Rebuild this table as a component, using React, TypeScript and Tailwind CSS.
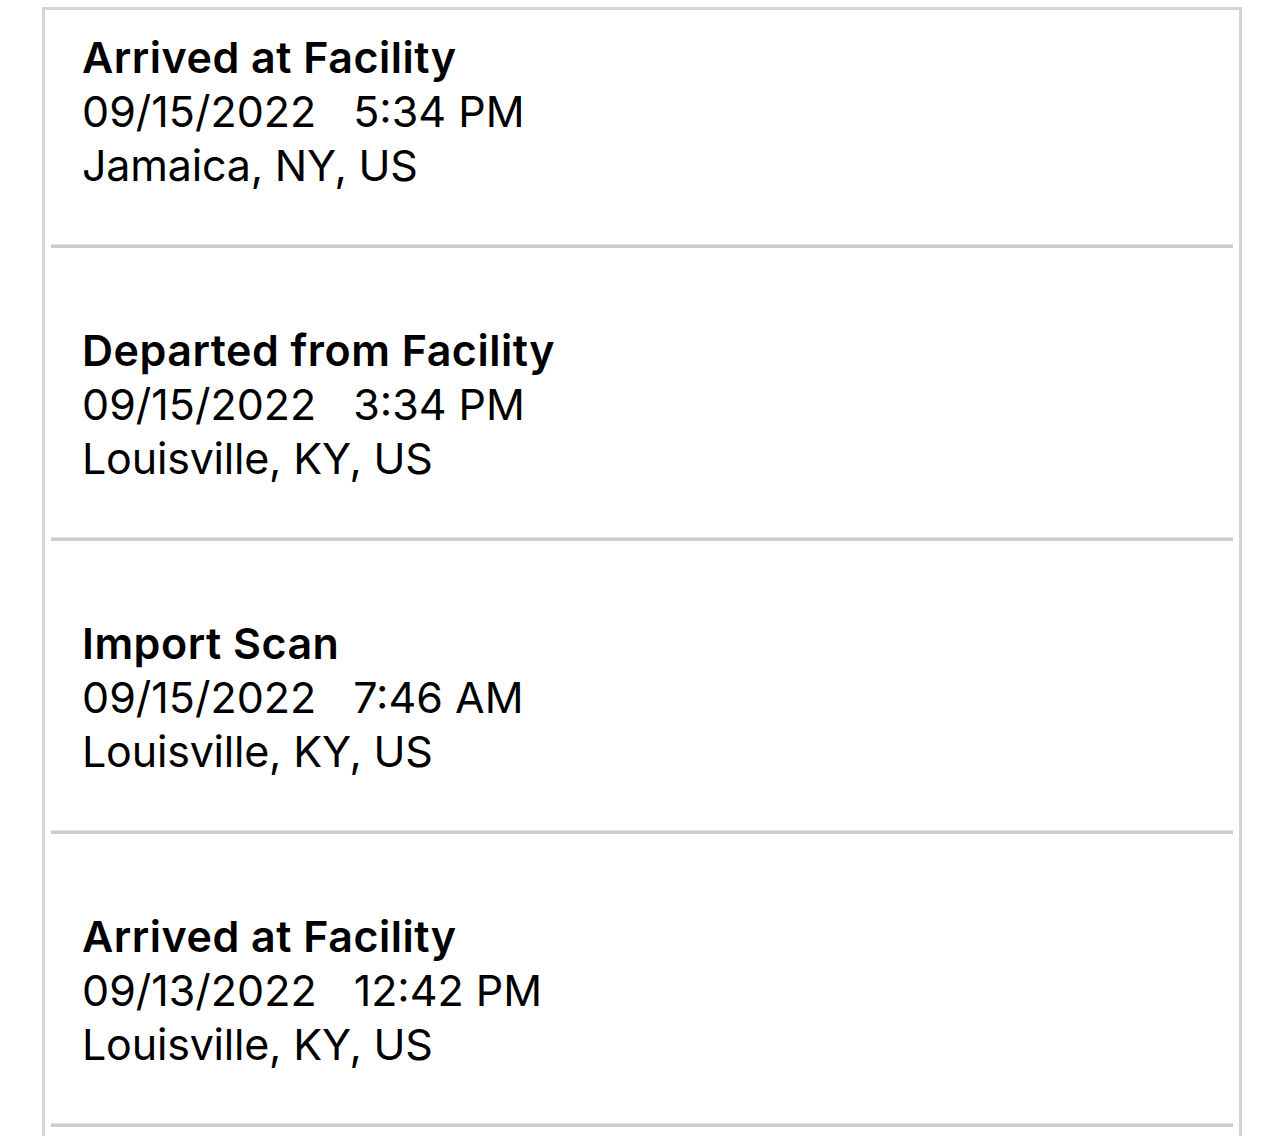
const events = [
  { title: "Arrived at Facility", date: "09/15/2022", time: "5:34 PM", place: "Jamaica, NY, US" },
  { title: "Departed from Facility", date: "09/15/2022", time: "3:34 PM", place: "Louisville, KY, US" },
  { title: "Import Scan", date: "09/15/2022", time: "7:46 AM", place: "Louisville, KY, US" },
  { title: "Arrived at Facility", date: "09/13/2022", time: "12:42 PM", place: "Louisville, KY, US" },
];

export default function App() {
  return (
    <div className="min-h-screen bg-white pt-[7px] pl-[42px]" style={{ fontFamily: "Inter, 'Noto Sans', sans-serif" }}>
      <div className="w-[1200px] border-[3px] border-b-0 border-[#d4d4d4] bg-white pb-[40px]">
        {events.map((e, i) => (
          <div key={i}>
            <div className={`${i === 0 ? "pt-[20px]" : "pt-[75px]"} pb-[52px] pl-[37px] text-[43px] leading-[54px] text-black`}>
              <p className="font-semibold tracking-[0.5px]">{e.title}</p>
              <p>
                {e.date}
                <span className="ml-[37px]">{e.time}</span>
              </p>
              <p className="tracking-[-0.2px]">{e.place}</p>
            </div>
            <div className="mx-[6px]">
              <div className="h-px bg-[#e4e1dd]" />
              <div className="h-[3px] bg-[#cfcbc6]" />
            </div>
          </div>
        ))}
      </div>
    </div>
  );
}
